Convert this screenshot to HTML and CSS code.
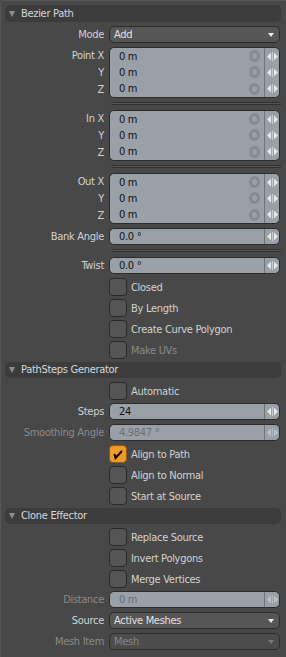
FILE: index.html
```html
<!DOCTYPE html>
<html lang="en">
  <head>
    <meta charset="UTF-8" />
    <meta name="viewport" content="width=device-width, initial-scale=1.0" />
    <title>Path Properties</title>
    <link rel="stylesheet" href="styles.css">
  </head>
  <body>
    <div class="panel">
      <!-- Bezier Path -->
      <div class="sec-head first"><span class="tri"></span>Bezier Path</div>

      <div class="row">
        <span class="lbl">Mode</span>
        <div class="select">Add<span class="caret"></span></div>
      </div>

      <div class="row vec">
        <div class="lbls"><span>Point X</span><span>Y</span><span>Z</span></div>
        <div class="field">
          <div class="vals">
            <div class="val">0 m<span class="ring"></span></div>
            <div class="val">0 m<span class="ring"></span></div>
            <div class="val">0 m<span class="ring"></span></div>
          </div>
          <div class="spin"><i></i><i></i><i></i></div>
        </div>
      </div>
      <div class="sep"></div>

      <div class="row vec">
        <div class="lbls"><span>In X</span><span>Y</span><span>Z</span></div>
        <div class="field">
          <div class="vals">
            <div class="val">0 m<span class="ring"></span></div>
            <div class="val">0 m<span class="ring"></span></div>
            <div class="val">0 m<span class="ring"></span></div>
          </div>
          <div class="spin"><i></i><i></i><i></i></div>
        </div>
      </div>
      <div class="sep"></div>

      <div class="row vec">
        <div class="lbls"><span>Out X</span><span>Y</span><span>Z</span></div>
        <div class="field">
          <div class="vals">
            <div class="val">0 m<span class="ring"></span></div>
            <div class="val">0 m<span class="ring"></span></div>
            <div class="val">0 m<span class="ring"></span></div>
          </div>
          <div class="spin"><i></i><i></i><i></i></div>
        </div>
      </div>

      <div class="row">
        <span class="lbl">Bank Angle</span>
        <div class="field"><div class="vals"><div class="val">0.0 °</div></div><div class="spin"><i></i></div></div>
      </div>
      <div class="sep"></div>

      <div class="row">
        <span class="lbl">Twist</span>
        <div class="field"><div class="vals"><div class="val">0.0 °</div></div><div class="spin"><i></i></div></div>
      </div>

      <div class="row"><span></span><label class="check"><span class="box"></span>Closed</label></div>
      <div class="row"><span></span><label class="check"><span class="box"></span>By Length</label></div>
      <div class="row"><span></span><label class="check"><span class="box"></span>Create Curve Polygon</label></div>
      <div class="row"><span></span><label class="check off"><span class="box"></span>Make UVs</label></div>

      <!-- PathSteps Generator -->
      <div class="sec-head"><span class="tri"></span>PathSteps Generator</div>

      <div class="row"><span></span><label class="check"><span class="box"></span>Automatic</label></div>
      <div class="row">
        <span class="lbl">Steps</span>
        <div class="field"><div class="vals"><div class="val">24</div></div><div class="spin"><i></i></div></div>
      </div>
      <div class="row">
        <span class="lbl off">Smoothing Angle</span>
        <div class="field off"><div class="vals"><div class="val">4.9847 °</div></div><div class="spin"><i></i></div></div>
      </div>
      <div class="row"><span></span><label class="check"><span class="box on"></span>Align to Path</label></div>
      <div class="row"><span></span><label class="check"><span class="box"></span>Align to Normal</label></div>
      <div class="row"><span></span><label class="check"><span class="box"></span>Start at Source</label></div>

      <!-- Clone Effector -->
      <div class="sec-head"><span class="tri"></span>Clone Effector</div>

      <div class="row"><span></span><label class="check"><span class="box"></span>Replace Source</label></div>
      <div class="row"><span></span><label class="check"><span class="box"></span>Invert Polygons</label></div>
      <div class="row"><span></span><label class="check"><span class="box"></span>Merge Vertices</label></div>
      <div class="row">
        <span class="lbl off">Distance</span>
        <div class="field off"><div class="vals"><div class="val">0 m</div></div><div class="spin"><i></i></div></div>
      </div>
      <div class="row">
        <span class="lbl">Source</span>
        <div class="select">Active Meshes<span class="caret"></span></div>
      </div>
      <div class="row">
        <span class="lbl off">Mesh Item</span>
        <div class="select off">Mesh<span class="caret"></span></div>
      </div>
    </div>
  </body>
</html>
```

FILE: styles.css
```css
body {
  margin: 0;
  padding: 0;
  background-color: #484848;
  font-family: "DejaVu Sans Condensed", "Liberation Sans", Arial, sans-serif;
  font-size: 11px;
  letter-spacing: -0.3px;
  color: #d2d2d2;
}

.panel {
  width: 286px;
  height: 657px;
  box-sizing: border-box;
  padding-top: 2px;
  border-top: 1px solid #575757;
  border-left: 1px solid #575757;
  border-top-left-radius: 4px;
  overflow: hidden;
}

.sec-head {
  height: 16px;
  line-height: 16px;
  margin: 4px 5px 0 4px;
  background-color: #3c3c3c;
  border-radius: 5px;
  color: #d6d8dc;
  display: flex;
  align-items: center;
}

.sec-head.first {
  height: 17px;
  line-height: 17px;
  margin-top: 2px;
}

.tri {
  width: 0;
  height: 0;
  border-left: 3px solid transparent;
  border-right: 3px solid transparent;
  border-top: 6px solid #8c8c8c;
  margin: 0 6px 0 4px;
}

.row {
  display: grid;
  grid-template-columns: 103px 171px;
  column-gap: 5px;
  height: 17px;
  margin-top: 4px;
}

.lbl {
  text-align: right;
  line-height: 17px;
  white-space: nowrap;
}

.off {
  color: #8a8a8a;
}

.row.vec {
  height: 51px;
}

.lbls {
  display: flex;
  flex-direction: column;
  text-align: right;
}

.lbls span {
  height: 17px;
  line-height: 17px;
}

.sep {
  height: 1px;
  margin: 4px 5px 5px 111px;
  border-top: 1px solid #303030;
  border-bottom: 1px solid #303030;
  background-color: #555;
}

.field {
  display: flex;
  box-sizing: border-box;
  background-color: #99a0a7;
  border: 1px solid #2c2c2c;
  border-radius: 5px;
  color: #111;
}

.field.off {
  color: #6a7076;
}

.vals {
  flex: 1;
  display: flex;
  flex-direction: column;
}

.val {
  flex: 1;
  display: flex;
  align-items: center;
  justify-content: space-between;
  padding-left: 9px;
  padding-right: 4px;
}

.ring {
  width: 5px;
  height: 6px;
  border: 3px solid #858b91;
  border-radius: 50%;
}

.spin {
  width: 14px;
  border-left: 1px solid #6c737a;
  display: flex;
  flex-direction: column;
}

.spin i {
  flex: 1;
  background: no-repeat center / 11px 9px url("data:image/svg+xml,%3Csvg xmlns='http://www.w3.org/2000/svg' width='11' height='9'%3E%3Cpath d='M0 4.5L4 0.5V8.5Z M7 0.5L11 4.5L7 8.5Z' fill='%23e8e8e8'/%3E%3Crect x='5' y='0' width='1' height='9' fill='%23c8cccf'/%3E%3C/svg%3E");
}

.field.off .spin i {
  opacity: 0.45;
}

.select {
  position: relative;
  box-sizing: border-box;
  background-color: #565656;
  border: 1px solid #2c2c2c;
  border-radius: 5px;
  line-height: 15px;
  padding-left: 4px;
  color: #e2e2e2;
}

.select.off {
  background-color: #4c4c4c;
  color: #858585;
}

.caret {
  position: absolute;
  right: 5px;
  top: 6px;
  width: 0;
  height: 0;
  border-left: 3.5px solid transparent;
  border-right: 3.5px solid transparent;
  border-top: 4px solid #ececec;
}

.select.off .caret {
  border-top-color: #7a7a7a;
}

.check {
  display: flex;
  align-items: center;
  gap: 4px;
  line-height: 17px;
  white-space: nowrap;
}

.box {
  width: 16px;
  height: 16px;
  background-color: #555;
  border: 1px solid #2a2a2a;
  border-radius: 4px;
  flex-shrink: 0;
}

.box.on {
  background: #ee9a27 no-repeat center / 12px 12px url("data:image/svg+xml,%3Csvg xmlns='http://www.w3.org/2000/svg' width='12' height='12'%3E%3Cpath d='M2.5 6L3.5 10L10 3' stroke='%23000' stroke-width='2' fill='none'/%3E%3C/svg%3E");
  border-color: #8a5a1a;
}
```
